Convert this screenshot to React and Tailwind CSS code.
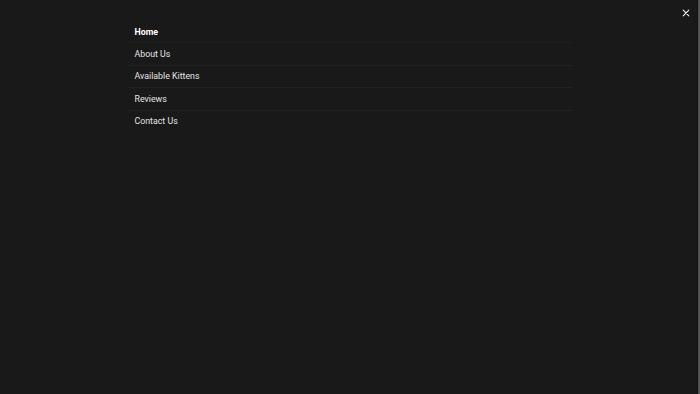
import React from "react";

const items = ["About Us", "Available Kittens", "Reviews", "Contact Us"];

export default function App() {
  return (
    <div
      className="relative flex h-[394px] w-full overflow-hidden bg-[#191919]"
      style={{ fontFamily: "Roboto, 'Liberation Sans', sans-serif" }}
    >
      <div className="flex-1 pt-[21px]">
        <nav className="mx-auto w-[446px] pl-[1px]">
          <ul className="flex flex-col">
            <li className="border-b border-[#1f1f1f] px-[8px] py-[4.7px] text-[8.8px] leading-[12px] font-bold text-white">
              Home
            </li>
            {items.map((t, i) => (
              <li
                key={t}
                className={
                  i < items.length - 1
                    ? "border-b border-[#222222] px-[8px] py-[4.7px] text-[8.8px] leading-[12px] text-[#e2e2e2]"
                    : "px-[8px] py-[4.7px] text-[8.8px] leading-[12px] text-[#e2e2e2]"
                }
              >
                {t}
              </li>
            ))}
          </ul>
        </nav>
      </div>
      <button className="absolute right-[9px] top-[8px] flex h-[10px] w-[10px] items-center justify-center text-[#f0f0f0]">
        <svg width="8" height="8" viewBox="0 0 10 10" fill="none" stroke="currentColor" strokeWidth="1.4" strokeLinecap="round">
          <path d="M1.5 1.5 L8.5 8.5 M8.5 1.5 L1.5 8.5" />
        </svg>
      </button>
      <div className="flex">
        <div className="w-px bg-[#101010]" />
        <div className="w-[2px] bg-[#555555]" />
      </div>
    </div>
  );
}
